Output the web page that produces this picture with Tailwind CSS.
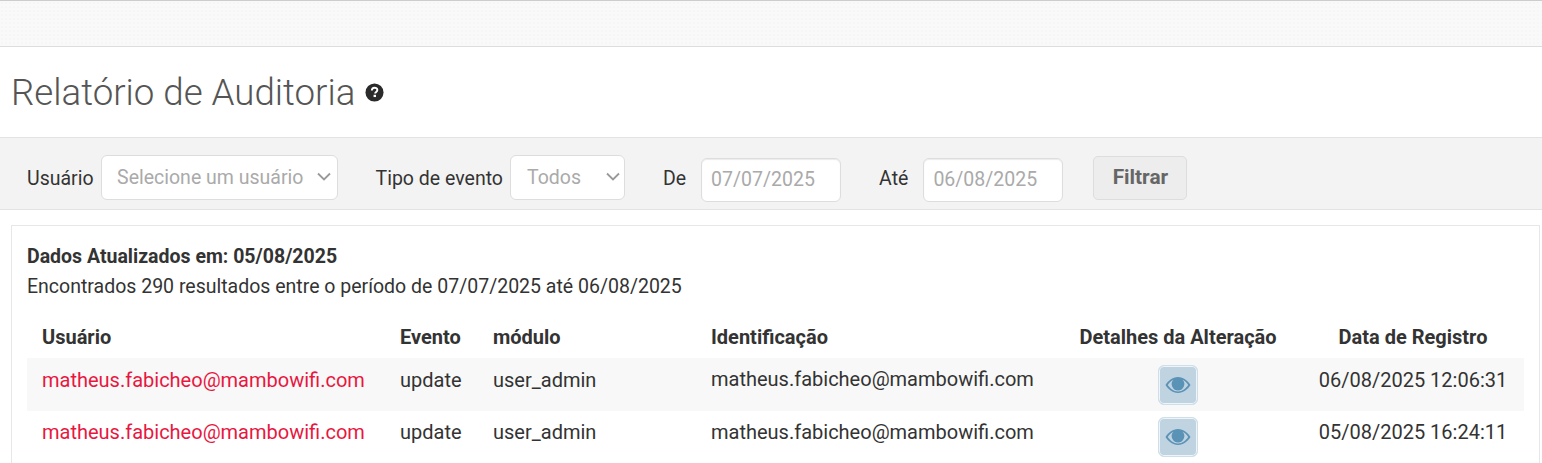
<!DOCTYPE html>
<html lang="pt-BR">
<head>
  <meta charset="UTF-8" />
  <title>Relatório de Auditoria</title>
  <script src="https://cdn.jsdelivr.net/npm/@tailwindcss/browser@4"></script>
</head>
<body class="h-[463px] overflow-hidden bg-white font-['Roboto',sans-serif] text-[19.5px] text-[#333]">
  <div class="h-[47px] border-y border-t-[#ccc] border-b-[#ddd] bg-[#f9f9f9] bg-[radial-gradient(#f6f6f6_1px,transparent_1px)] bg-[length:4px_4px]"></div>

  <div class="flex h-[90px] items-center pl-[11px]">
    <h1 class="pt-[2px] text-[36.7px] font-light text-[#555]">Relatório de Auditoria</h1>
    <svg class="ml-[10px] mt-[1px] h-[19px] w-[19px]" viewBox="0 0 20 20">
      <circle cx="10" cy="10" r="9.5" fill="#2b2b2b" />
      <path d="M7.2 8c0-4 5.800-3.800 5.800-.6 0 2-2.300 2-2.300 3.600" fill="none" stroke="#fff" stroke-width="2" />
      <rect x="9" y="12.400" width="2.600" height="2.400" fill="#fff" />
    </svg>
  </div>

  <form class="flex h-[73px] items-start border-y border-[#e3e3e3] bg-[#f3f3f3] pl-[27px]">
    <label class="mt-[30px] leading-[22px]">Usuário</label>
    <div class="relative ml-[7px] mt-[17px] flex h-[45px] w-[237px] items-center rounded-[6px] border border-[#ddd] bg-white pl-[15.500px] text-[#aaa]">
      Selecione um usuário
      <svg class="absolute right-[6px] top-[15px] h-[12px] w-[14px]" viewBox="0 0 14 12"><path d="M1 2.500l6 6 6-6" fill="none" stroke="#999" stroke-width="1.800" /></svg>
    </div>
    <label class="ml-[38px] mt-[30px] leading-[22px]">Tipo de evento</label>
    <div class="relative ml-[7px] mt-[17px] flex h-[45px] w-[115px] items-center rounded-[6px] border border-[#ddd] bg-white pl-[16px] text-[#aaa]">
      Todos
      <svg class="absolute right-[4px] top-[15px] h-[12px] w-[14px]" viewBox="0 0 14 12"><path d="M1 2.500l6 6 6-6" fill="none" stroke="#999" stroke-width="1.800" /></svg>
    </div>
    <label class="ml-[38px] mt-[30px] leading-[22px]">De</label>
    <div class="ml-[15px] mt-[20px] flex h-[44px] w-[140px] items-center rounded-[6px] border border-[#ddd] bg-white pl-[9px] text-[#aaa] shadow-[inset_0_1px_1px_rgba(0,0,0,0.08)]">07/07/2025</div>
    <label class="ml-[38px] mt-[30px] leading-[22px]">Até</label>
    <div class="ml-[15px] mt-[20px] flex h-[44px] w-[140px] items-center rounded-[6px] border border-[#ddd] bg-white pl-[9px] text-[#aaa] shadow-[inset_0_1px_1px_rgba(0,0,0,0.08)]">06/08/2025</div>
    <button type="button" class="ml-[30px] mt-[18px] h-[44px] w-[94px] rounded-[5px] border border-[#ddd] bg-[#ededed] text-[20.800px] font-bold text-[#666]">Filtrar</button>
  </form>

  <section class="ml-[11px] mr-[2px] mt-[15px] h-[300px] border border-[#e7e7e7] bg-white px-[15px] pt-[16px]">
    <p class="font-bold leading-[30px]">Dados Atualizados em: 05/08/2025</p>
    <p class="leading-[30px]">Encontrados 290 resultados entre o período de 07/07/2025 até 06/08/2025</p>
    <table class="mt-[14px] w-[1497px] table-fixed text-[20px]">
      <thead>
        <tr class="h-[42px] font-bold">
          <th class="w-[373px] pl-[15px] text-left">Usuário</th>
          <th class="w-[93px] text-left">Evento</th>
          <th class="w-[218px] text-left">módulo</th>
          <th class="w-[343px] text-left">Identificação</th>
          <th class="w-[248px] text-center">Detalhes da Alteração</th>
          <th class="text-center">Data de Registro</th>
        </tr>
      </thead>
      <tbody>
        <tr class="h-[53px] bg-[#f8f8f8]">
          <td class="pb-[10px] pl-[15px] font-[450] text-[#e8173f]">matheus.fabicheo@mambowifi.com</td>
          <td class="pb-[10px]">update</td>
          <td class="pb-[10px]">user_admin</td>
          <td class="pb-[12px]">matheus.fabicheo@mambowifi.com</td>
          <td class="text-center">
            <button type="button" class="inline-flex h-[40px] w-[40px] items-center justify-center rounded-[6px] border border-[#cfdfe9] bg-[#bfd3e1] align-middle shadow-[inset_0_0_0_1px_#eef4f8]">
              <svg class="h-[18px] w-[26px]" viewBox="0 0 26 18"><path fill-rule="evenodd" fill="#5b93b6" d="M13 1C7.500 1 3 5 .5 9 3 13 7.500 17 13 17s10-4 12.500-8C23 5 18.500 1 13 1zM8.500 3.700A6 6 0 0 0 13 14a6 6 0 0 0 4.500-10.300C20 4.800 22 6.800 23.200 9 21 12.200 17.500 15.500 13 15.500S5 12.200 2.800 9C4 6.800 6 4.800 8.500 3.700z" /><path fill="none" stroke="#5b93b6" stroke-width="1.500" d="M9.500 6.500a4.500 4.500 0 1 0 7 0" /></svg>
            </button>
          </td>
          <td class="pb-[10px] text-center">06/08/2025 12:06:31</td>
        </tr>
        <tr class="h-[52px]">
          <td class="pb-[10px] pl-[15px] font-[450] text-[#e8173f]">matheus.fabicheo@mambowifi.com</td>
          <td class="pb-[10px]">update</td>
          <td class="pb-[10px]">user_admin</td>
          <td class="pb-[10px]">matheus.fabicheo@mambowifi.com</td>
          <td class="text-center">
            <button type="button" class="inline-flex h-[40px] w-[40px] items-center justify-center rounded-[6px] border border-[#cfdfe9] bg-[#bfd3e1] align-middle shadow-[inset_0_0_0_1px_#eef4f8]">
              <svg class="h-[18px] w-[26px]" viewBox="0 0 26 18"><path fill-rule="evenodd" fill="#5b93b6" d="M13 1C7.500 1 3 5 .5 9 3 13 7.500 17 13 17s10-4 12.500-8C23 5 18.500 1 13 1zM8.500 3.700A6 6 0 0 0 13 14a6 6 0 0 0 4.500-10.300C20 4.800 22 6.800 23.200 9 21 12.200 17.500 15.500 13 15.500S5 12.200 2.800 9C4 6.800 6 4.800 8.500 3.700z" /><path fill="none" stroke="#5b93b6" stroke-width="1.500" d="M9.500 6.500a4.500 4.500 0 1 0 7 0" /></svg>
            </button>
          </td>
          <td class="pb-[10px] text-center">05/08/2025 16:24:11</td>
        </tr>
      </tbody>
    </table>
  </section>
</body>
</html>
